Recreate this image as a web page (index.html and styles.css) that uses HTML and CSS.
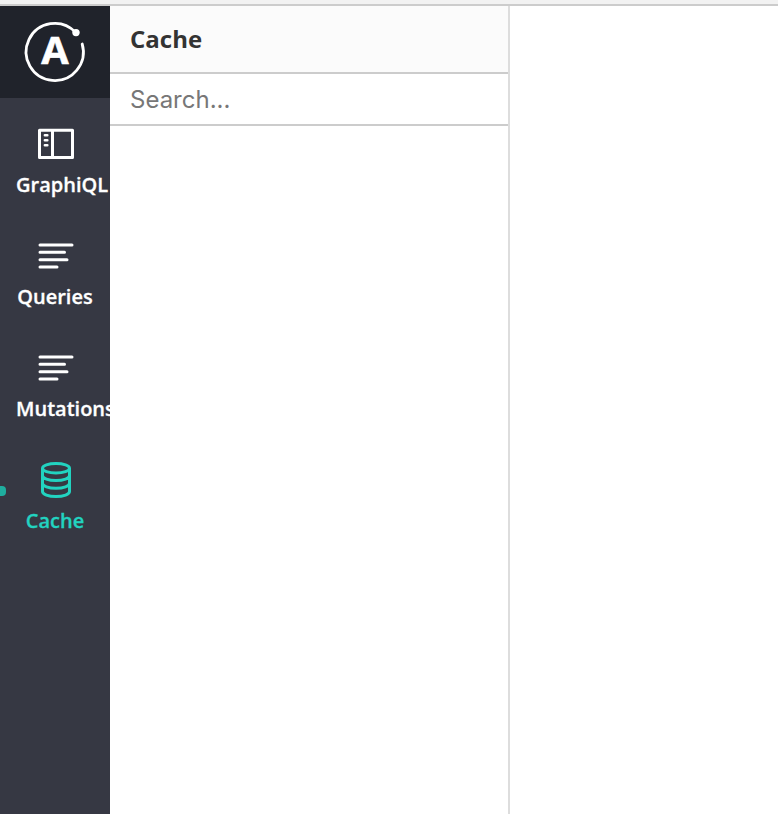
FILE: index.html
```html
<!DOCTYPE html>
<html lang="en">
<head>
<meta charset="utf-8">
<title>Cache</title>
<link rel="stylesheet" href="styles.css">
</head>
<body>
<div class="topbar"></div>
<div class="app">
  <nav class="sidebar">
    <div class="logo">
      <svg width="110" height="92" viewBox="0 6 110 92">
        <path d="M75.5 32.3A28.6 28.6 0 1 0 82.2 44" fill="none" stroke="#fff" stroke-width="2.800" stroke-linecap="round"/>
        <circle cx="76" cy="32.6" r="3.7" fill="#fff"/>
        <text class="logo-letter" x="41.300" y="64" textLength="27.400" lengthAdjust="spacingAndGlyphs">A</text>
      </svg>
    </div>
    <a class="item">
      <svg class="icon" width="36" height="36" viewBox="0 0 36 36" fill="none" stroke="currentColor">
        <rect x="1.500" y="4.200" width="33" height="27.300" stroke-width="3" stroke-linejoin="round"/>
        <path d="M14.500 4v28" stroke-width="3"/>
        <path d="M6.900 9.300h2.400M6.900 14.300h2.400M6.900 19.300h2.400" stroke-width="2.600" stroke-linecap="round"/>
      </svg>
      <span class="label">GraphiQL</span>
    </a>
    <a class="item">
      <svg class="icon" width="36" height="36" viewBox="0 0 36 36" fill="none" stroke="currentColor" stroke-width="3" stroke-linecap="round">
        <path d="M2 7h32M2 14.300h24.500M2 21.700h27M2 29h17"/>
      </svg>
      <span class="label">Queries</span>
    </a>
    <a class="item">
      <svg class="icon" width="36" height="36" viewBox="0 0 36 36" fill="none" stroke="currentColor" stroke-width="3" stroke-linecap="round">
        <path d="M2 7h32M2 14.300h24.500M2 21.700h27M2 29h17"/>
      </svg>
      <span class="label">Mutations</span>
    </a>
    <a class="item active">
      <svg class="icon" width="36" height="36" viewBox="0 0 36 36" fill="none" stroke="currentColor" stroke-width="3">
        <ellipse cx="18" cy="6.300" rx="13.500" ry="4.800"/>
        <path d="M4.500 6v23.500c0 2.800 6 5 13.500 5s13.500-2.200 13.500-5V6M4.500 13.500c0 2.800 6 5 13.500 5s13.500-2.200 13.500-5M4.500 21.300c0 2.800 6 5 13.500 5s13.500-2.200 13.500-5"/>
      </svg>
      <span class="label">Cache</span>
    </a>
  </nav>
  <section class="list">
    <h1 class="title">Cache</h1>
    <input class="search" type="text" placeholder="Search...">
  </section>
  <main class="detail"></main>
</div>
</body>
</html>
```

FILE: styles.css
```css
* { box-sizing: border-box; }
body {
  margin: 0;
  height: 814px;
  display: flex;
  flex-direction: column;
  overflow: hidden;
  background: #fff;
  font-family: "Open Sans", sans-serif;
}
.topbar {
  height: 6px;
  flex: none;
  background: #f2f2f2;
  border-bottom: 2px solid #ccc;
}
.app { display: flex; flex: 1; }
.sidebar {
  width: 110px;
  flex: none;
  overflow: hidden;
  background: #363843;
  color: #fff;
}
.logo { height: 92px; background: #20232b; }
.logo svg { display: block; }
.logo-letter {
  font: 700 37.5px "Open Sans", sans-serif;
  fill: #fff;
  stroke: #fff;
  stroke-width: 0.6px;
}
.item {
  position: relative;
  display: flex;
  flex-direction: column;
  align-items: center;
  height: 112px;
  padding: 28px 16px 0;
}
.icon { flex: none; margin-left: 2px; }
.label {
  min-width: 100%;
  margin-top: 9px;
  font-size: 20px;
  font-weight: 600;
  line-height: 28px;
  text-align: center;
  white-space: nowrap;
  align-self: flex-start;
  -webkit-text-stroke: 0.3px currentColor;
}
.active { color: #22d3c0; }
.active::before {
  content: "";
  position: absolute;
  left: 0;
  top: 52px;
  width: 6px;
  height: 10px;
  border-radius: 0 4px 4px 0;
  background: #1fae9f;
}
.list {
  width: 400px;
  flex: none;
  border-right: 2px solid #ddd;
}
.title {
  margin: 0;
  height: 68px;
  padding: 0 20px;
  background: #fbfbfb;
  border-bottom: 2px solid #ccc;
  color: #333;
  font-size: 24px;
  font-weight: 700;
  line-height: 66px;
}
.search {
  display: block;
  width: 100%;
  height: 52px;
  padding: 0 20px;
  border: 0;
  border-bottom: 2px solid #ccc;
  border-radius: 0;
  background: #fff;
  font: 24px Inter, sans-serif;
  outline: 0;
}
.search::placeholder { color: #777; }
.detail { flex: 1; }
```
